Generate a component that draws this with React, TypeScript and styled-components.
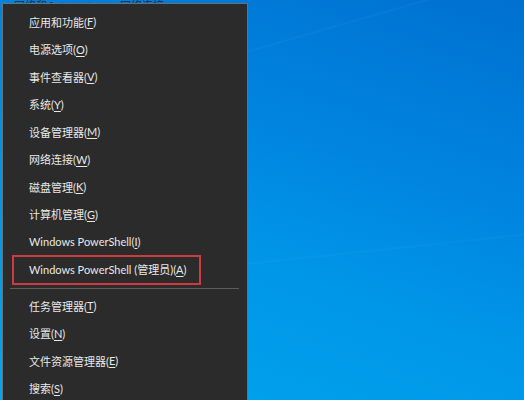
import * as React from "react";
import styled, { createGlobalStyle } from "styled-components";

const GlobalStyle = createGlobalStyle`
  html, body {
    margin: 0;
    padding: 0;
    overflow: hidden;
  }
  #root {
    width: 524px;
    height: 400px;
  }
`;

const Desktop = styled.div`
  width: 524px;
  height: 400px;
  overflow: hidden;
  display: flex;
  flex-direction: column;
  background:
    linear-gradient(164deg, transparent 0 22%, rgba(255, 255, 255, 0.035) 22.2%, transparent 22.6%),
    linear-gradient(-6deg, transparent 0 36%, rgba(255, 255, 255, 0.03) 36.2%, transparent 36.8%),
    linear-gradient(200deg, #0070d0 0%, #0084df 35%, #0096e8 60%, #00a6ee 100%);
  font-family: "Noto Sans", "Noto Sans CJK SC", sans-serif;
`;

const TopStrip = styled.div`
  height: 3px;
  overflow: hidden;
  display: flex;
  align-items: flex-end;
  gap: 28px;
  padding-left: 14px;
  flex-shrink: 0;
`;

const StripText = styled.span`
  font-size: 11px;
  line-height: 11px;
  color: #1d2a3a;
  margin-bottom: -8px;
`;

const Menu = styled.div`
  margin-left: 2px;
  width: 244px;
  flex: 1;
  background: #2b2b2b;
  border: 1px solid #6a7078;
  border-bottom: none;
  padding-top: 4px;
  display: flex;
  flex-direction: column;
`;

const Item = styled.div`
  position: relative;
  height: 27.5px;
  display: flex;
  align-items: center;
  padding-left: 26px;
  font-size: 11px;
  color: #e8e8e8;
  white-space: nowrap;
  font-family: Lato, "Noto Sans CJK SC", sans-serif;
`;

const Key = styled.span`
  text-decoration: underline;
  text-underline-offset: 2px;
`;

const Highlight = styled.span`
  position: absolute;
  left: 9px;
  top: -1px;
  bottom: -2px;
  width: 185px;
  border: 2px solid #cf3a42;
`;

const Separator = styled.div`
  height: 1px;
  background: #5c5c5c;
  margin: 5px 8px 3px 7px;
`;

interface Entry {
  label: string;
  key: string;
  marked?: boolean;
}

const first: Entry[] = [
  { label: "应用和功能", key: "F" },
  { label: "电源选项", key: "O" },
  { label: "事件查看器", key: "V" },
  { label: "系统", key: "Y" },
  { label: "设备管理器", key: "M" },
  { label: "网络连接", key: "W" },
  { label: "磁盘管理", key: "K" },
  { label: "计算机管理", key: "G" },
  { label: "Windows PowerShell", key: "I" },
  { label: "Windows PowerShell (管理员)", key: "A", marked: true },
];

const second: Entry[] = [
  { label: "任务管理器", key: "T" },
  { label: "设置", key: "N" },
  { label: "文件资源管理器", key: "E" },
  { label: "搜索", key: "S" },
];

function renderItems(list: Entry[]) {
  return list.map((entry, i) => (
    <Item key={i}>
      {entry.label}(<Key>{entry.key}</Key>)
      {entry.marked && <Highlight />}
    </Item>
  ));
}

export default function App() {
  return (
    <>
      <GlobalStyle />
      <Desktop>
        <TopStrip>
          <StripText>网络和 Internet</StripText>
          <StripText>网络连接</StripText>
        </TopStrip>
        <Menu>
          {renderItems(first)}
          <Separator />
          {renderItems(second)}
        </Menu>
      </Desktop>
    </>
  );
}
